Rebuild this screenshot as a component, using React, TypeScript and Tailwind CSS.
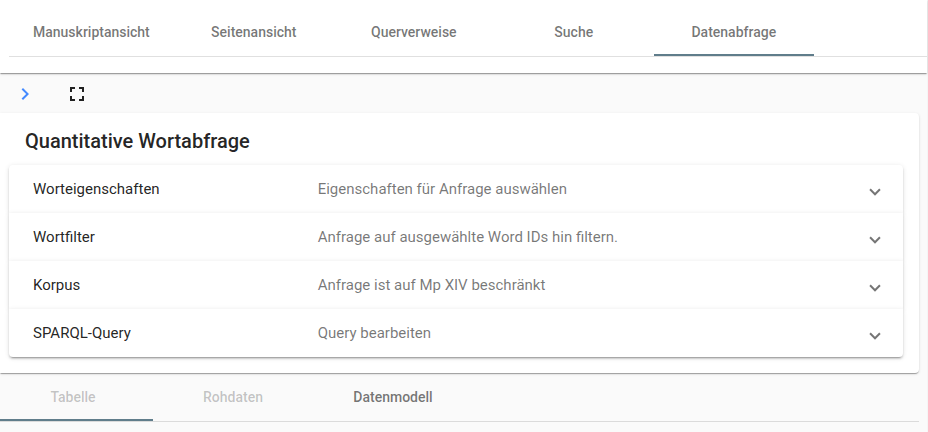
const tabs = ['Manuskriptansicht', 'Seitenansicht', 'Querverweise', 'Suche', 'Datenabfrage'];

const panels = [
  { title: 'Worteigenschaften', description: 'Eigenschaften für Anfrage auswählen' },
  { title: 'Wortfilter', description: 'Anfrage auf ausgewählte Word IDs hin filtern.' },
  { title: 'Korpus', description: 'Anfrage ist auf Mp XIV beschränkt' },
  { title: 'SPARQL-Query', description: 'Query bearbeiten' },
];

const resultTabs = [
  { label: 'Tabelle', disabled: true, active: true },
  { label: 'Rohdaten', disabled: true, active: false },
  { label: 'Datenmodell', disabled: false, active: false },
];

function MainNav() {
  return (
    <header className="h-[73px] bg-white pl-[9px] pt-2 shadow-[0_2px_1px_-1px_rgba(0,0,0,0.2),0_1px_1px_0_rgba(0,0,0,0.14),0_1px_3px_0_rgba(0,0,0,0.12)]">
      <nav className="flex h-[49px] border-b border-black/12">
        {tabs.map((tab) => (
          <div
            key={tab}
            className={`flex h-12 min-w-40 items-center justify-center border-b-2 px-6 pt-0.5 text-sm font-medium text-black/55 ${
              tab === 'Datenabfrage' ? 'border-[#607d8b]' : 'border-transparent'
            }`}
          >
            {tab}
          </div>
        ))}
      </nav>
    </header>
  );
}

function Toolbar() {
  return (
    <div className="flex h-10 items-center pl-[13.3px]">
      <svg viewBox="0 0 24 24" className="mt-0.5 size-6" fill="#448aff">
        <path d="M10 6 8.59 7.41 13.17 12l-4.58 4.59L10 18l6-6z" />
      </svg>
      <svg viewBox="0 0 24 24" className="ml-7 mt-0.5 size-6" fill="#212121">
        <path d="M7 14H5v5h5v-2H7v-3zm-2-4h2V7h3V5H5v5zm12 7h-3v2h5v-5h-2v3zM14 5v2h3v3h2V5h-5z" />
      </svg>
    </div>
  );
}

function Panel({ title, description }: { title: string; description: string }) {
  return (
    <div className="flex h-12 items-center bg-white px-6 text-[15px] shadow-[0_3px_1px_-2px_rgba(0,0,0,0.2),0_2px_2px_0_rgba(0,0,0,0.14),0_1px_5px_0_rgba(0,0,0,0.12)] first:rounded-t last:rounded-b">
      <span className="w-[284.7px] text-black/87">{title}</span>
      <span className="grow text-black/54">{description}</span>
      <span className="mt-0.5 size-2 rotate-45 border-b-2 border-r-2 border-black/54" />
    </div>
  );
}

export default function App() {
  return (
    <div className="h-[432px] overflow-hidden bg-[#f5f5f5] pr-px font-[Roboto,sans-serif]">
      <div className="h-full bg-[#fafafa]">
        <MainNav />
        <Toolbar />
        <main className="mr-2">
          <section className="h-[260px] rounded-r bg-white pl-[9px] pr-4 shadow-[0_2px_1px_-1px_rgba(0,0,0,0.2),0_1px_1px_0_rgba(0,0,0,0.14),0_1px_3px_0_rgba(0,0,0,0.12)]">
            <h1 className="h-[52px] pl-4 pt-3 text-xl leading-8 font-medium text-black/87">Quantitative Wortabfrage</h1>
            <div>
              {panels.map((panel) => (
                <Panel key={panel.title} {...panel} />
              ))}
            </div>
          </section>
          <nav className="flex h-[49px] border-b border-black/12">
            {resultTabs.map((tab) => (
              <div
                key={tab.label}
                className={`flex h-12 w-40 items-center justify-center border-b-2 pt-0.5 text-sm font-medium first:-ml-[7px] ${
                  tab.active ? 'border-[#607d8b]' : 'border-transparent'
                } ${tab.disabled ? 'text-black/23' : 'text-black/55'}`}
              >
                {tab.label}
              </div>
            ))}
          </nav>
        </main>
      </div>
    </div>
  );
}
